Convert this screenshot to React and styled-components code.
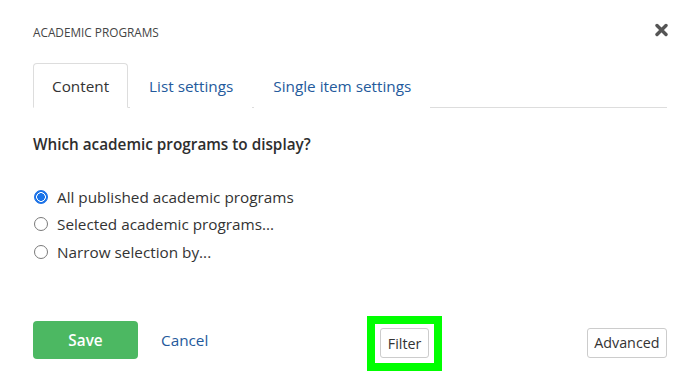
import { useState } from 'react'
import styled, { createGlobalStyle } from 'styled-components'

const GlobalStyle = createGlobalStyle`
    body {
        margin: 0;
        background: #ffffff;
        font-family: 'Open Sans', 'Noto Sans', sans-serif;
        color: #333333;
    }
`

const Dialog = styled.div`
    width: 700px;
    height: 382px;
    box-sizing: border-box;
    padding: 20px 33px 0 33px;
    overflow: hidden;
`

const Header = styled.div`
    display: flex;
    justify-content: space-between;
    align-items: center;
    height: 20px;
`

const Title = styled.div`
    font-size: 11.8px;
    line-height: 16px;
    color: #444444;
    margin-top: 4px;
`

const CloseButton = styled.button`
    border: none;
    background: none;
    padding: 0;
    margin-right: -1px;
    width: 13px;
    height: 14px;
    display: flex;
    cursor: pointer;
`

const TabBar = styled.div`
    display: flex;
    margin-top: 23px;
    border-bottom: 1px solid #dddddd;
`

const Tab = styled.div`
    height: 45px;
    padding: 0 18px;
    margin-right: 2px;
    margin-bottom: -1px;
    display: flex;
    align-items: center;
    font-size: 15.3px;
    box-sizing: border-box;
    border: 1px solid ${({ active }) => (active ? '#dddddd' : 'transparent')};
    border-bottom-color: ${({ active }) => (active ? '#ffffff' : 'transparent')};
    border-radius: 4px 4px 0 0;
    background: #ffffff;
    color: ${({ active }) => (active ? '#333333' : '#245a9c')};
    cursor: pointer;
`

const Question = styled.div`
    margin-top: 26px;
    font-size: 15.3px;
    line-height: 20px;
    font-weight: 600;
    color: #2e2e2e;
`

const RadioList = styled.div`
    margin-top: 29px;
    display: flex;
    flex-direction: column;
`

const RadioRow = styled.label`
    display: flex;
    align-items: center;
    height: 27.5px;
    font-size: 15.3px;
    color: #333333;
    cursor: pointer;
`

const RadioDot = styled.span`
    width: 14px;
    height: 14px;
    box-sizing: border-box;
    border-radius: 50%;
    margin-left: 1px;
    margin-right: 9px;
    border: 1px solid ${({ checked }) => (checked ? '#1a6fe6' : '#7a7a7a')};
    background: ${({ checked }) => (checked ? 'radial-gradient(circle, #1a73e8 0 3.6px, #ffffff 4px 4.6px, #1a73e8 5px)' : '#ffffff')};
`

const ButtonRow = styled.div`
    margin-top: 50px;
    display: flex;
    align-items: flex-start;
`

const SaveButton = styled.button`
    margin-top: 5px;
    width: 105px;
    height: 38px;
    border: none;
    border-radius: 4px;
    background: #4cb862;
    color: #ffffff;
    font-family: inherit;
    font-size: 15.3px;
    font-weight: 600;
    cursor: pointer;
`

const CancelLink = styled.a`
    margin-top: 5px;
    margin-left: 23px;
    line-height: 38px;
    font-size: 15.3px;
    color: #245a9c;
    cursor: pointer;
`

const Highlight = styled.div`
    margin-left: 159px;
    border: 8px solid #00ff00;
    padding: 4.5px;
    display: flex;
`

const PlainButton = styled.button`
    height: 30px;
    padding: 0 ${({ pad }) => pad}px;
    border: 1px solid #cccccc;
    border-radius: 3px;
    background: #ffffff;
    font-family: inherit;
    font-size: 14.3px;
    color: #333333;
    cursor: pointer;
`

const AdvancedButton = styled(PlainButton)`
    margin-top: 12px;
    margin-left: auto;
`

const options = ['All published academic programs', 'Selected academic programs...', 'Narrow selection by...']

const App = () => {
    const [tab, setTab] = useState(0)
    const [choice, setChoice] = useState(0)

    return (
        <Dialog>
            <GlobalStyle />
            <Header>
                <Title>ACADEMIC PROGRAMS</Title>
                <CloseButton aria-label="Close">
                    <svg width="13" height="14" viewBox="0 0 13 14">
                        <path d="M2 2.5 L11 11.5 M11 2.5 L2 11.5" stroke="#555555" strokeWidth="3.4" strokeLinecap="round" />
                    </svg>
                </CloseButton>
            </Header>

            <TabBar>
                {['Content', 'List settings', 'Single item settings'].map((name, i) => (
                    <Tab key={name} active={tab === i} onClick={() => setTab(i)}>
                        {name}
                    </Tab>
                ))}
            </TabBar>

            <Question>Which academic programs to display?</Question>

            <RadioList>
                {options.map((label, i) => (
                    <RadioRow key={label} onClick={() => setChoice(i)}>
                        <RadioDot checked={choice === i} />
                        {label}
                    </RadioRow>
                ))}
            </RadioList>

            <ButtonRow>
                <SaveButton>Save</SaveButton>
                <CancelLink>Cancel</CancelLink>
                <Highlight>
                    <PlainButton pad={7}>Filter</PlainButton>
                </Highlight>
                <AdvancedButton pad={6.5}>Advanced</AdvancedButton>
            </ButtonRow>
        </Dialog>
    )
}

export default App
